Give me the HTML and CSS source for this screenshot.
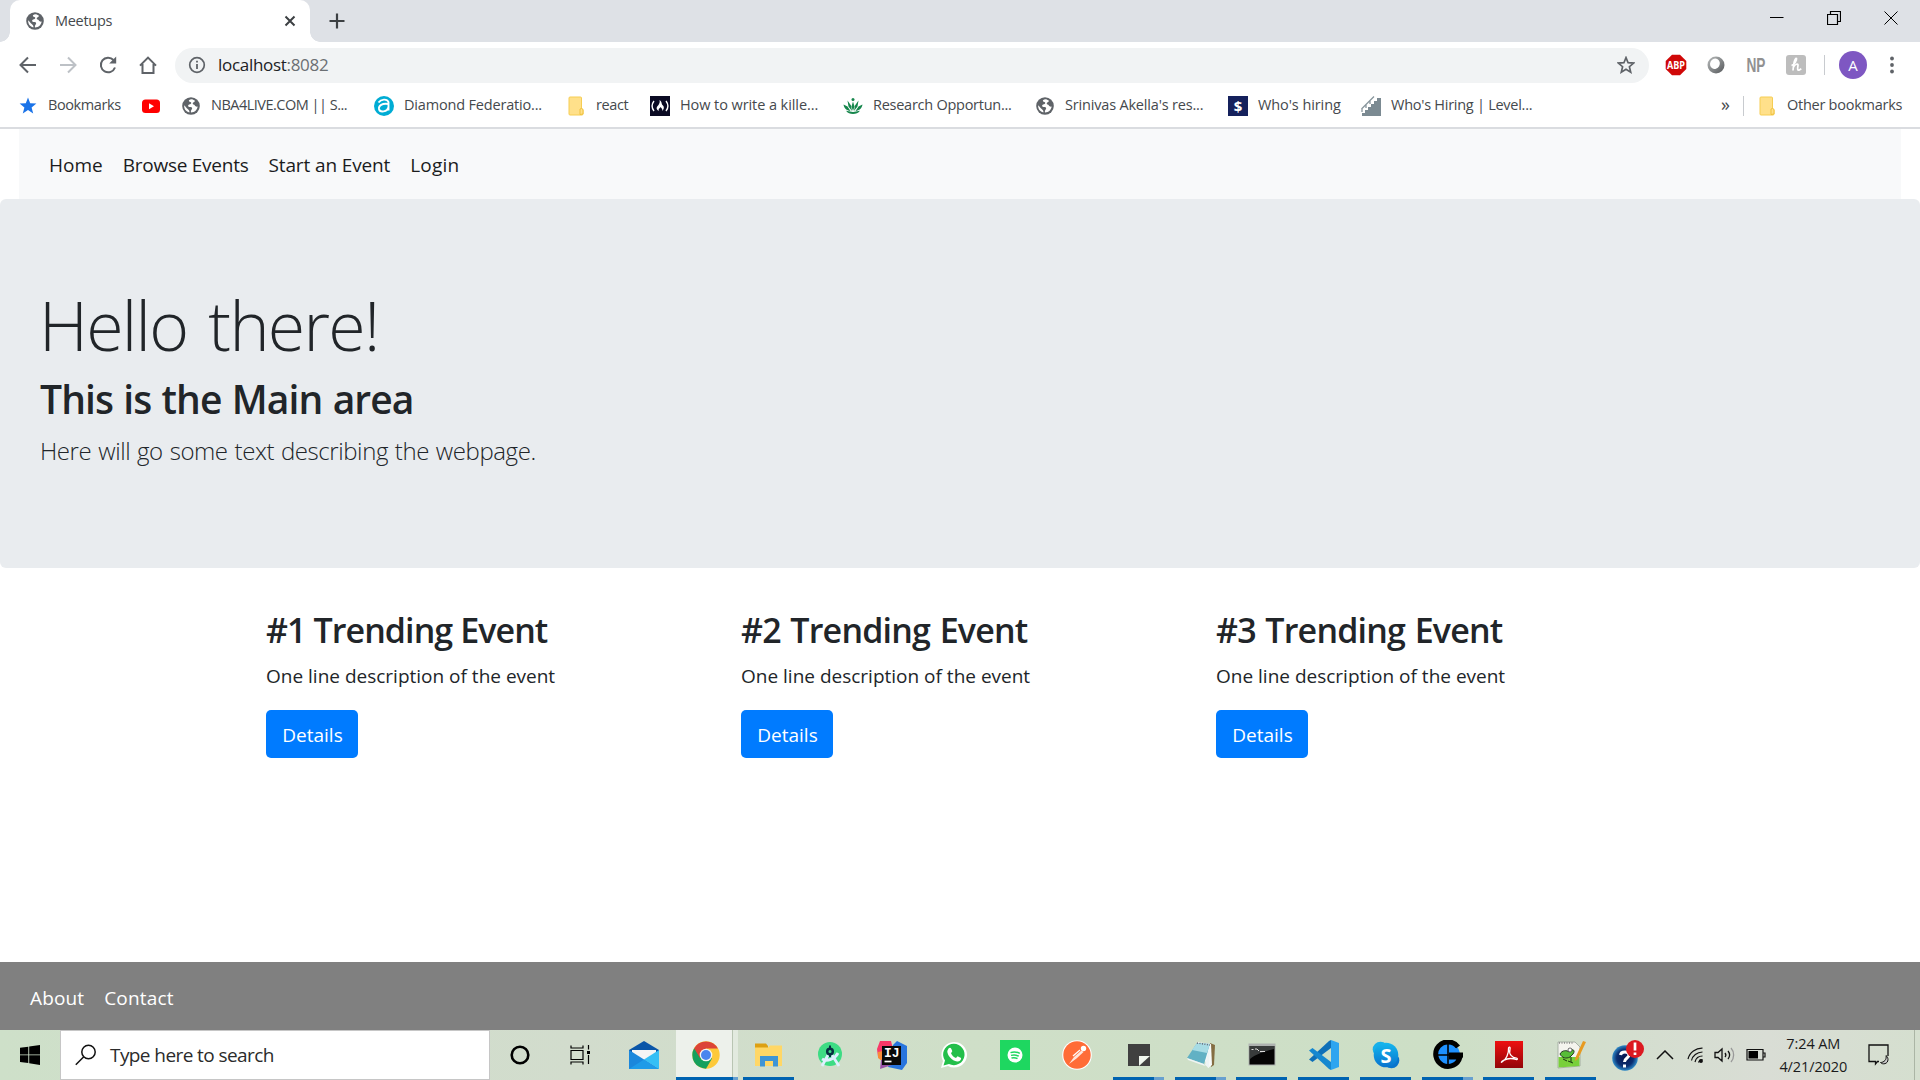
FILE: index.html
```html
<!DOCTYPE html>
<html lang="en">
<head>
<meta charset="utf-8">
<title>Meetups</title>
<link rel="stylesheet" href="styles.css">
</head>
<body>
<svg class="defs" width="0" height="0">
  <defs>
    <symbol id="globe" viewBox="0 0 18 18"><circle cx="9" cy="9" r="8.8" fill="#5f6368"/><path d="M10.2 2.2C7.500 2 6.500 3.200 7 4.300c.7 1 2.200.4 2.300 1.700C9.300 7.300 7 7 6.200 8.200c-.5 1.200.8 1.900 2.300 1.900 1.800 0 2.200 1.500 1 2.600-.8.8-.6 2-.5 2.900 3.800-.1 6.300-2.700 6.600-6-1.300.3-2.200-.2-2.700-1.100-.5-1.200-2.200-.7-2.200-2 0-1.200 1.900-1.200 2.300-2.700A7 7 0 0 0 10.200 2.200Z" fill="#fff"/><path d="M2.200 8.200c-.4 3.500 2 6.500 5.200 7.200.3-1.700-.6-2.500-1.700-3.400C4.400 11 3.600 9.700 2.200 8.200Z" fill="#fff"/></symbol>
    <symbol id="folder" viewBox="0 0 18 20"><path d="M3 1h10.500a1 1 0 0 1 1 1v10.500l1.500 1v4.500a1 1 0 0 1-1 1H3a1 1 0 0 1-1-1V2a1 1 0 0 1 1-1Z" fill="#ffe08a" stroke="#f6cd53" stroke-width="1"/><path d="M13 18.500v-5.500l1.500-.5 1.500 1v4.500Z" fill="#ffe08a" stroke="#f0c23e"/></symbol>
  </defs>
</svg>

<header class="browser">
  <div class="tabstrip">
    <div class="tab">
      <svg width="18" height="18"><use href="#globe"/></svg>
      <span class="tab-title">Meetups</span>
      <svg class="tab-close" width="12" height="12" viewBox="0 0 12 12"><path d="M1.500 1.500l9 9M10.500 1.500l-9 9" stroke="#3c4043" stroke-width="2"/></svg>
    </div>
    <svg class="new-tab" width="16" height="16" viewBox="0 0 16 16"><path d="M8 .5v15M.5 8h15" stroke="#3c4043" stroke-width="2.200"/></svg>
    <div class="window-controls">
      <svg width="14" height="14" viewBox="0 0 14 14"><path d="M0 6.500h13.500" stroke="#000"/></svg>
      <svg width="14" height="14" viewBox="0 0 14 14"><path d="M.5 3.500h10v10H.5zM3.500 3V.5h10v10H11" fill="none" stroke="#000" stroke-width="1.200"/></svg>
      <svg width="14" height="14" viewBox="0 0 14 14"><path d="M.5.5l13 13M13.500.5l-13 13" stroke="#000"/></svg>
    </div>
  </div>

  <div class="toolbar">
    <div class="nav-buttons">
      <svg width="20" height="20" viewBox="0 0 20 20"><path d="M18 10H3M10 2.500L2.500 10l7.500 7.500" fill="none" stroke="#5f6368" stroke-width="2"/></svg>
      <svg width="20" height="20" viewBox="0 0 20 20"><path d="M2 10h15M10 2.500l7.500 7.500-7.500 7.500" fill="none" stroke="#bdc1c6" stroke-width="2"/></svg>
      <svg width="20" height="20" viewBox="0 0 20 20"><path d="M17 12.500A7.300 7.300 0 1 1 15.500 5" fill="none" stroke="#5f6368" stroke-width="2"/><path d="M18.200 1.500v7h-7Z" fill="#5f6368"/></svg>
      <svg width="20" height="20" viewBox="0 0 20 20"><path d="M4.500 10v8h11v-8M2 10.600L10 2.600l8 8M3.500 10h2M14.500 10h2" fill="none" stroke="#5f6368" stroke-width="2"/></svg>
    </div>
    <div class="omnibox">
      <svg width="18" height="18" viewBox="0 0 18 18"><circle cx="9" cy="9" r="7.300" fill="none" stroke="#5f6368" stroke-width="1.700"/><path d="M9 8v5M9 4.800v1.800" stroke="#5f6368" stroke-width="1.800"/></svg>
      <span class="url">localhost<span class="port">:8082</span></span>
      <svg class="star" width="18" height="18" viewBox="0 0 18 18"><path d="M9 1.600l2.100 5.100 5.500.4-4.200 3.600 1.300 5.400L9 13.200l-4.700 2.900 1.300-5.400L1.400 7.100l5.500-.4Z" fill="none" stroke="#5f6368" stroke-width="1.700"/></svg>
    </div>
    <div class="extensions">
      <svg width="22" height="22" viewBox="0 0 22 22"><path d="M7 .7h8L21.300 7v8L15 21.300H7L.7 15V7Z" fill="#d00808"/><text x="11" y="15" text-anchor="middle" class="abp" textLength="18" lengthAdjust="spacingAndGlyphs">ABP</text></svg>
      <svg width="22" height="22" viewBox="0 0 22 22"><defs><linearGradient id="ring" x1="0" y1="0" x2="1" y2="1"><stop offset="0" stop-color="#b9bcbc"/><stop offset="1" stop-color="#55585b"/></linearGradient></defs><circle cx="11" cy="11" r="8.500" fill="url(#ring)"/><ellipse cx="9.800" cy="9.800" rx="4.800" ry="5.300" fill="#fff" transform="rotate(30 10 10)"/></svg>
      <svg class="np-icon" width="22" height="22" viewBox="0 0 22 22"><text x="1.500" y="18" class="np" textLength="19" lengthAdjust="spacingAndGlyphs">NP</text></svg>
      <svg width="22" height="22" viewBox="0 0 22 22"><rect x="1" y="1" width="20" height="20" rx="3" fill="#bdbdbd"/><path d="M6.500 11.500c3-1 5.500-5 5-7-2-.5-3 6-3.500 12M8.500 13c1.500-3 4.800-4 4.500-1.500-.3 2.300-1 5 1 4.700l2.300-1.500" fill="none" stroke="#fff" stroke-width="1.700"/></svg>
    </div>
    <span class="divider toolbar-divider"></span>
    <span class="avatar">A</span>
    <svg class="menu" width="6" height="18" viewBox="0 0 6 18"><circle cx="3" cy="2.500" r="1.900"/><circle cx="3" cy="9" r="1.900"/><circle cx="3" cy="15.500" r="1.900"/></svg>
  </div>

  <nav class="bookmarks">
    <a class="bm"><svg width="20" height="20" viewBox="0 0 20 20"><path d="M10 1.500l2.200 5.800 6.200.3-4.800 3.900 1.600 6L10 14.100l-5.200 3.400 1.600-6L1.600 7.600l6.200-.3Z" fill="#1a73e8"/></svg><span class="bm-label tight">Bookmarks</span></a>
    <a class="bm"><svg width="20" height="20" viewBox="0 0 20 20"><rect x="1" y="3.500" width="18" height="13.500" rx="3.500" fill="#f00"/><path d="M8 7.300v6l5-3Z" fill="#fff"/></svg></a>
    <a class="bm"><svg width="20" height="20" viewBox="0 0 20 20"><use href="#globe" x="1" y="1" width="18" height="18"/></svg><span class="bm-label tighter">NBA4LIVE.COM || S...</span></a>
    <a class="bm"><svg width="20" height="20" viewBox="0 0 20 20"><circle cx="10" cy="10" r="10" fill="#00acd4"/><path d="M4.500 6.500C7 3 13 2.500 14.500 6v8.500M14.500 8C8 7 4.500 9.500 5 13c.8 4 8.500 3 9.500-2" fill="none" stroke="#fff" stroke-width="1.900"/></svg><span class="bm-label">Diamond Federatio...</span></a>
    <a class="bm"><svg width="20" height="20" viewBox="0 0 18 20"><use href="#folder" width="18" height="20"/></svg><span class="bm-label tight">react</span></a>
    <a class="bm"><svg width="20" height="20" viewBox="0 0 20 20"><path d="M0 0h20v20H0Z" fill="#0a0a23"/><path d="M4 5C1.700 8 1.700 12 4 15M16 5c2.300 3 2.300 7 0 10" fill="none" stroke="#fff" stroke-width="1.400"/><path d="M9.500 4c3 2 1.500 4 3.500 5.500 1.500 1.700 1 4-1 5.500 1-2.300-.8-2.500-1.200-4C9.500 12.500 8 13 8.800 15 5.500 13 6.500 11 8.500 9 9.500 7.500 10 6 9.500 4Z" fill="#fff"/></svg><span class="bm-label loose">How to write a kille...</span></a>
    <a class="bm"><svg width="20" height="20" viewBox="0 0 20 20" fill="#16864c"><circle cx="10" cy="3.500" r="1.500"/><path d="M10 5.500l1.500 5L10 15l-1.500-4.500ZM4.500 4.500l3.500 5 1 5.500-3.500-4.500ZM15.500 4.500l-3.500 5-1 5.500 3.500-4.500ZM.5 8.500l4 2 3 4.500c-4-.5-6.500-3-7-6.500ZM19.500 8.500l-4 2-3 4.500c4-.5 6.500-3 7-6.500ZM3 14.800l7 1.200 7-1.200c-3 4.300-11 4.300-14 0Z"/></svg><span class="bm-label mid">Research Opportun...</span></a>
    <a class="bm"><svg width="20" height="20" viewBox="0 0 20 20"><use href="#globe" x="1" y="1" width="18" height="18"/></svg><span class="bm-label">Srinivas Akella's res...</span></a>
    <a class="bm"><svg width="20" height="20" viewBox="0 0 20 20"><path d="M0 0h20v20H0Z" fill="#15215c"/><text x="10" y="15.500" text-anchor="middle" class="dollar">$</text></svg><span class="bm-label loose">Who's hiring</span></a>
    <a class="bm"><svg width="20" height="20" viewBox="0 0 20 20"><path d="M1 20v-3h3v-3h3v-3h3V8h3V5h3V2h4v18Z" fill="#7b8a92"/><path d="M.5 13L13 .5M1 13v3M5 9v3M9 5v3" stroke="#89969d" stroke-width="1.300"/></svg><span class="bm-label mid">Who's Hiring | Level...</span></a>
    <a class="bm-more">»</a>
    <span class="divider"></span>
    <a class="bm"><svg width="20" height="20" viewBox="0 0 18 20"><use href="#folder" width="18" height="20"/></svg><span class="bm-label mid">Other bookmarks</span></a>
  </nav>
</header>

<main class="page">
  <nav class="site-nav">
    <a>Home</a><a class="l-browse">Browse Events</a><a class="l-start">Start an Event</a><a class="l-login">Login</a>
  </nav>
  <section class="jumbotron">
    <h1>Hello there!</h1>
    <h2>This is the Main area</h2>
    <p>Here will go some text describing the webpage.</p>
  </section>
  <section class="events">
    <article class="event"><h3>#1 Trending Event</h3><p>One line description of the event</p><a class="btn">Details</a></article>
    <article class="event"><h3>#2 Trending Event</h3><p>One line description of the event</p><a class="btn">Details</a></article>
    <article class="event"><h3>#3 Trending Event</h3><p>One line description of the event</p><a class="btn">Details</a></article>
  </section>
  <footer class="site-footer"><a>About</a><a>Contact</a></footer>
</main>

<footer class="taskbar">
  <div class="start"><svg width="20" height="20" viewBox="0 0 20 20"><path d="M0 2.800L8.300 1.700v7.700H0ZM9.200 1.600L20 0v9.400H9.200ZM0 10.300h8.300V18L0 16.900ZM9.200 10.300H20v9.700L9.200 18.300Z"/></svg></div>
  <div class="search">
    <svg width="22" height="22" viewBox="0 0 22 22"><circle cx="13.500" cy="8" r="6.700" fill="none" stroke="#111" stroke-width="1.500"/><path d="M8.800 12.800L.8 20.800" stroke="#111" stroke-width="1.500"/></svg>
    <span class="search-text">Type here to search</span>
  </div>
  <div class="apps">
    <div class="app cortana"><svg width="20" height="20" viewBox="0 0 20 20"><circle cx="10" cy="10" r="8.300" fill="none" stroke="#000" stroke-width="2.600"/></svg></div>
    <div class="app"><svg width="22" height="20" viewBox="0 0 22 20" fill="none" stroke="#000" stroke-width="1.200"><path d="M1 5.500h12v9H1zM1 .5v2.500h12V.5M1 19.500V17h12v2.500M18.500 0v4.500M18.500 10v9"/><path d="M17 6h3v3h-3z" fill="#000" stroke="none"/></svg></div>
    <div class="app mail"><svg width="30" height="30" viewBox="0 0 30 30"><path d="M0 10L15 1l15 9v6H0Z" fill="#0a55a8"/><path d="M3 10h24v6L15 20 3 16Z" fill="#f5f5f5"/><path d="M0 10l30 19H0Z" fill="#1b87dc"/><path d="M30 10L15 19.500 30 29Z" fill="#35bff5"/><path d="M15 19.500L30 29H0Z" fill="#1f9be8"/></svg></div>
    <div class="app active"><svg width="28" height="28" viewBox="0 0 28 28"><circle cx="14" cy="14" r="13.700" fill="#fdc93a"/><path d="M14 14L2.100 7.200A13.700 13.700 0 0 0 14 27.700L20 17.500Z" fill="#16a05d"/><path d="M2.100 7.200A13.700 13.700 0 0 1 25.900 7.500H14L8 17Z" fill="#dc4437"/><circle cx="14" cy="14" r="6.300" fill="#f4f6f4"/><circle cx="14" cy="14" r="5" fill="#4a86ee"/></svg></div>
    <div class="app open"><svg width="30" height="28" viewBox="0 0 30 28"><path d="M1 2.500h11l2 2.500v4H1Z" fill="#dda013"/><path d="M1 6.500h13l2-2h12V25H1Z" fill="#ffd766"/><path d="M6 25.500V15h18v10.500h-5V20h-8v5.500Z" fill="#3f95d5"/></svg></div>
    <div class="app"><svg width="26" height="28" viewBox="0 0 26 28"><circle cx="13" cy="13" r="12" fill="#3ddc84"/><path d="M11 14L5 25M15 14l7 11M5 18c5 3 13 0 16-6" stroke="#dff0ff" stroke-width="2.800" fill="none"/><circle cx="13" cy="10.500" r="2.800" fill="none" stroke="#073042" stroke-width="2.500"/><path d="M13 4.500v3M13 13v3" stroke="#073042" stroke-width="2"/></svg></div>
    <div class="app"><svg width="30" height="30" viewBox="0 0 30 30"><path d="M3 1h11l3 12L1 17l-1-8Z" fill="#f83868"/><path d="M1 12l9-2v15L1 18Z" fill="#f98b38"/><path d="M16 5l4-4 10 5v17l-5 7-14-3Z" fill="#2875de"/><path d="M4 20l9-2 2 7-12 4Z" fill="#9852a8"/><path d="M5 6h19v19H5Z" fill="#090909"/><text x="7" y="16.500" class="ij">IJ</text><path d="M7.500 21.500h7" stroke="#fff" stroke-width="1.700"/></svg></div>
    <div class="app"><svg width="28" height="28" viewBox="0 0 28 28"><path d="M1 27l2-7A12.800 12.800 0 1 1 8 25Z" fill="#fff"/><path d="M3.500 24.500L5 19.500A10.700 10.700 0 1 1 9 23Z" fill="#23bf4a"/><path d="M8.500 7.500c2-1.800 2.800-.2 3.800 2.800l-1.300 2c1 2.300 2.700 3.800 5 4.700l1.500-1.800 3.600 1.700c.3 2-1.600 3.700-4 3.500C12 20 7 14 7.300 10Z" fill="#fff"/></svg></div>
    <div class="app"><svg width="30" height="30" viewBox="0 0 30 30"><path d="M0 0h30v30H0Z" fill="#1ed760"/><circle cx="15" cy="15" r="7.500" fill="#fff"/><path d="M10.500 12.600c3-1 6.500-.7 9.300.8M11 15.400c2.600-.8 5.400-.5 7.800.8M11.500 18c2-.5 4.300-.3 6 .7" fill="none" stroke="#1ed760" stroke-width="1.500"/></svg></div>
    <div class="app"><svg width="30" height="30" viewBox="0 0 30 30"><circle cx="15" cy="15" r="14.800" fill="#fff"/><circle cx="15" cy="15" r="13.700" fill="#ff6c37"/><circle cx="21.500" cy="8.500" r="2.700" fill="#fff"/><path d="M19.500 10.500L12 17l-5 7 7.500-5.500 7-6.500Z" fill="#ffe6dc"/><path d="M18 10l-7 6" stroke="#fff" stroke-width="1.300"/></svg></div>
    <div class="app open multi"><svg width="24" height="24" viewBox="0 0 24 24"><path d="M1 1h22v12H12v10H1Z" fill="#404040"/><path d="M12 13h11L12 23Z" fill="#f0f6ee"/><path d="M23 13v10H12Z" fill="#404040"/></svg></div>
    <div class="app open multi"><svg width="30" height="28" viewBox="0 0 30 28"><path d="M24 2l5 2-1 20-3 2Z" fill="#846d42"/><path d="M11 1l14 2 1 21-4 3Z" fill="#f7fafa"/><path d="M11 2l13 1-6 20L1 17Z" fill="#62b1c4"/><path d="M11 2l13 1-3 9L6 9Z" fill="#a7dce5"/><path d="M1 17l17 6 1 2L2 19ZM24 3l-5 21 4 3Z" fill="#eef4f4"/><path d="M11 2l13 2" stroke="#667" stroke-width="1.500" stroke-dasharray="1 1.500"/></svg></div>
    <div class="app open"><svg width="28" height="24" viewBox="0 0 28 24"><path d="M.5.5h27v22H.5Z" fill="#aeb2b0"/><path d="M1.500 3h25v18.500h-25Z" fill="#050505"/><path d="M2 3h24v3C18 8 8 11 2 16Z" fill="#383b3b"/><path d="M3.500 6.500h2M7 6h2l2 2M12 8.500h5" stroke="#ddd" fill="none"/></svg></div>
    <div class="app open"><svg width="30" height="30" viewBox="0 0 30 30"><path d="M22 0v8L3.500 22 0 19.500 20 1Z" fill="#0f70b8"/><path d="M3.500 8L0 10.500 20 29l2 1v-8Z" fill="#1688d0"/><path d="M22 0l8 3v24l-8 3Z" fill="#2ea5f0"/></svg></div>
    <div class="app open"><svg width="28" height="28" viewBox="0 0 28 28"><defs><linearGradient id="sky" x1="0" y1="0" x2="0" y2="1"><stop offset="0" stop-color="#15b7ee"/><stop offset="1" stop-color="#0873ce"/></linearGradient></defs><circle cx="8.500" cy="8.500" r="7.800" fill="#17b0ea"/><circle cx="19.500" cy="19.500" r="7.800" fill="#0874cd"/><circle cx="14" cy="14" r="12.300" fill="url(#sky)"/><text x="14" y="21.500" text-anchor="middle" class="skype">S</text></svg></div>
    <div class="app open multi"><svg width="30" height="30" viewBox="0 0 30 30"><circle cx="15" cy="15" r="12" fill="#1e90ff"/><path d="M25 7A12.300 12.300 0 1 0 27 17H16" fill="none" stroke="#000" stroke-width="5"/><path d="M15 4v22M4 15h12" stroke="#000" stroke-width="1.600"/><path d="M19 8h4l2 4h-6Z" fill="#1e90ff"/><path d="M16 12.500h14v5H16Z"/></svg></div>
    <div class="app open"><svg width="28" height="28" viewBox="0 0 28 28"><defs><linearGradient id="pdf" x1="0" y1="0" x2="0" y2="1"><stop offset="0" stop-color="#ee1010"/><stop offset="1" stop-color="#930508"/></linearGradient></defs><path d="M0 0h28v27H0Z" fill="url(#pdf)"/><path d="M7 21c4-2 7-9 6.500-13.500 0-2 2.200-2 1.500.7-1.500 5 2 8.500 6.500 9 1.500.2 1 1.800-.5 1.300-4-1.500-9-1-12.500.8-2.500 1.500-2.500 2.600-1.500 1.700Z" fill="none" stroke="#fff" stroke-width="1.300"/></svg></div>
    <div class="app open"><svg width="30" height="30" viewBox="0 0 30 30"><path d="M2 2h17l5 5v19l-22 2Z" fill="#f4f4ee" stroke="#9aa39a" stroke-width=".8"/><path d="M2.500 17h21v9l-21 1.500Z" fill="#78d03a"/><path d="M4 14c2-4 7-4 9-2 3-4 7-2 4 2l-3 3c-4 2-8 1-10-3Z" fill="#57bd37" stroke="#243b20"/><circle cx="14" cy="10" r="2" fill="#fff" stroke="#333" stroke-width=".7"/><path d="M7 19l4 2M12 21l5 2M15 17v5" stroke="#193810"/><path d="M27 1l3 1-8 17-3 2 .5-3.500Z" fill="#e89a20"/><path d="M3 3h14" stroke="#555" stroke-dasharray="1 1.500"/></svg></div>
  </div>
  <div class="tray">
    <svg width="32" height="32" viewBox="0 0 32 32"><defs><radialGradient id="help"><stop offset="0" stop-color="#08144a"/><stop offset=".65" stop-color="#0a2e72"/><stop offset="1" stop-color="#2f8ac7"/></radialGradient></defs><circle cx="13" cy="19" r="12.800" fill="url(#help)"/><path d="M8.500 16c.5-4 8.500-4 8.500 0 0 3-4.500 3-4.500 7M12.500 25.500v3" fill="none" stroke="#fff" stroke-width="3"/><circle cx="23" cy="10" r="9" fill="#dc1920"/><path d="M23 3.500v8M23 13.500v2.500" stroke="#fff" stroke-width="2.700"/></svg>
    <svg class="chevron" width="18" height="10" viewBox="0 0 18 10"><path d="M1 9l8-8 8 8" fill="none" stroke="#111" stroke-width="1.500"/></svg>
    <svg class="wifi" width="18" height="16" viewBox="0 0 18 16" fill="none" stroke="#111" stroke-width="1.200"><path d="M1 12C2.500 5 9 1 15.500 1.200M4.500 13.500C5.500 8.500 10 5.200 15.500 5M8 15c.8-3.500 3.500-6 7.500-6M11.500 15.500c.5-1.500 2-3 4-3"/><circle cx="14" cy="14" r="1.300" fill="#111"/></svg>
    <svg class="sound" width="22" height="18" viewBox="0 0 22 18" fill="none" stroke="#111" stroke-width="1.300"><path d="M1 6.500h3L8 3v12l-4-3.500H1ZM11 7c1 1.300 1 3 0 4M14 5c2 2.500 2 5.500 0 8"/><path d="M17 2c3.500 4 3.500 10 0 14" stroke="#999"/></svg>
    <svg class="battery" width="20" height="14" viewBox="0 0 20 14"><path d="M1 1.500h16v10.500H1ZM17.500 5h1.500v4h-1.500" fill="none" stroke="#111" stroke-width="1.200"/><path d="M2.500 3h9.500v7.500H2.500Z"/></svg>
    <div class="clock"><span class="time">7:24 AM</span><span class="date">4/21/2020</span></div>
    <svg class="notify" width="22" height="22" viewBox="0 0 22 22"><path d="M11 17.500H9.500l-2 2.500v-2.500H1V1h19v11" fill="none" stroke="#111" stroke-width="1.300"/><path d="M18 11.500c1 4-2 7-5.500 7 2 2.500 7.500 1.500 7.500-3 0-1.500-.7-3-2-4Z" fill="#ccc" stroke="#111"/></svg>
    <span class="show-desktop"></span>
  </div>
</footer>
</body>
</html>
```
FILE: styles.css
```css
* { box-sizing: border-box; }
body {
  margin: 0;
  width: 1920px;
  height: 1080px;
  overflow: hidden;
  display: flex;
  flex-direction: column;
  background: #fff;
  color: #212529;
  font-family: "Open Sans", "Noto Sans", sans-serif;
  font-size: 19px;
}
h1, h2, h3, p { margin: 0; white-space: nowrap; }
svg { display: block; flex: none; }
.defs { position: absolute; }
.divider { width: 1px; height: 20px; background: #c8cbcf; }

/* Browser chrome */
.browser { height: 129px; border-bottom: 2px solid #dadce0; }
.tabstrip { height: 42px; padding-left: 10px; display: flex; background: #dee1e6; }
.tab {
  position: relative;
  width: 300px;
  padding: 0 14px 0 16px;
  display: flex;
  align-items: center;
  background: #fff;
  border-radius: 10px 10px 0 0;
}
.tab::before, .tab::after {
  content: "";
  position: absolute;
  bottom: 0;
  width: 10px;
  height: 10px;
}
.tab::before { left: -10px; background: radial-gradient(circle at 0 0, transparent 9.500px, #fff 10px); }
.tab::after { right: -10px; background: radial-gradient(circle at 100% 0, transparent 9.500px, #fff 10px); }
.tab-title { margin-left: 11px; padding-bottom: 2px; font-size: 14.500px; color: #45494d; letter-spacing: -.3px; }
.tab-close { margin-left: auto; }
.new-tab { margin: 13px 0 0 19px; }
.window-controls { margin: 11px 22px 0 auto; display: flex; gap: 43px; }

.toolbar { height: 46px; display: flex; align-items: center; padding: 0 25px 0 18px; }
.nav-buttons { width: 157px; display: flex; gap: 20px; }
.omnibox {
  width: 1474px;
  height: 35px;
  padding: 0 14px 0 13px;
  display: flex;
  align-items: center;
  border-radius: 18px;
  background: #f1f3f4;
}
.url { margin-left: 12px; padding-bottom: 2px; font-size: 17px; color: #202124; letter-spacing: -.3px; }
.port { color: #6b6f73; }
.star { margin-left: auto; }
.extensions { display: flex; gap: 18px; margin-left: 16px; }
.abp { font: 700 10px "Open Sans", sans-serif; fill: #fff; }
.np-icon { overflow: visible; }
.np { font: 700 20px "Liberation Sans", sans-serif; fill: #919191; }
.toolbar-divider { margin-left: 17px; }
.avatar {
  width: 28px;
  height: 28px;
  margin-left: 14px;
  border-radius: 50%;
  background: #7e57c2;
  color: #fff;
  font-size: 15px;
  line-height: 28px;
  text-align: center;
}
.menu { margin-left: auto; fill: #5f6368; }

.bookmarks {
  height: 36px;
  padding: 0 18px;
  display: grid;
  grid-template-columns: 123px 40px 193px 192px 84px 193px 192px 193px 133px 360px 22px 14px 1fr;
  align-items: center;
}
.bm { display: flex; align-items: center; gap: 10px; white-space: nowrap; }
.bm-label { padding-bottom: 3px; font-size: 14.500px; color: #45494d; letter-spacing: -.18px; }
.bm-label.tighter { letter-spacing: -.5px; }
.bm-label.tight { letter-spacing: -.4px; }
.bm-label.mid { letter-spacing: -.26px; }
.bm-label.loose { letter-spacing: -.08px; }
.bm-more { font-size: 18px; color: #45494d; padding-bottom: 5px; }

/* Web page */
.page { height: 901px; display: flex; flex-direction: column; }
.site-nav { height: 70px; margin: 0 19px; padding: 2px 30px 0; display: flex; align-items: center; gap: 20px; background: #f8f9fa; color: #1b1c1d; }
.l-browse { letter-spacing: -.25px; }
.l-start { letter-spacing: -.13px; }
.l-login { letter-spacing: .2px; }
.jumbotron { height: 369px; padding: 84px 40px 0; border-radius: 6px; background: #e9ecef; }
.jumbotron h1 { height: 92px; font-size: 68px; font-weight: 300; line-height: 84px; letter-spacing: -1.700px; word-spacing: 5px; text-indent: -1px; }
.jumbotron h2 { height: 57px; font-size: 39px; font-weight: 600; line-height: 48px; letter-spacing: -.9px; word-spacing: 1px; }
.jumbotron p { font-size: 24px; font-weight: 300; line-height: 38px; letter-spacing: -.420px; word-spacing: 1.100px; }
.events { width: 1425px; margin: 40px auto 0; display: grid; grid-template-columns: repeat(3, 475px); }
.event { padding-left: 18.500px; }
.event h3 { height: 42px; font-size: 34px; font-weight: 600; line-height: 44px; letter-spacing: -.8px; word-spacing: 1.500px; }
.event:first-child h3 { letter-spacing: -.920px; word-spacing: 0; }
.event p { margin: 11px 0 19px; line-height: 30px; }
.btn { display: block; width: 92px; height: 48px; padding-left: 1px; border-radius: 5px; background: #007bff; color: #fff; line-height: 50px; text-align: center; }
.site-footer { height: 68px; margin-top: auto; padding: 4px 30px 0; display: flex; align-items: center; gap: 20px; background: #808080; color: #fff; letter-spacing: .15px; }

/* Taskbar */
.taskbar { height: 50px; display: flex; background: linear-gradient(90deg, #cee0c9, #d2dccd 30%, #cfdfc8 50%, #cddfc6 75%, #d9ddd5 92%, #d5dfcf); }
.start { flex: none; width: 60px; display: grid; place-items: center; }
.search { flex: none; width: 430px; padding-left: 14px; display: flex; align-items: center; gap: 13px; background: #fff; border: 1px solid #c6c6c6; color: #2b2b2b; }
.search-text { letter-spacing: -.580px; }
.apps { flex: none; display: flex; }
.app { flex: none; position: relative; width: 61.720px; display: grid; place-items: center; }
.cortana { width: 60px; }
.mail { width: 64.300px; }
.active { background: linear-gradient(90deg, #edf1eb 56px, #b9c5b3 56px, #b9c5b3 57px, #e2eadf 57px); }
.active svg { margin-right: 1px; }
.active::after, .open::after { content: ""; position: absolute; bottom: 0; left: 5px; width: 51px; height: 3px; background: #0063b1; }
.active::after { left: 0; width: 100%; background: linear-gradient(90deg, #0063b1 57px, #68a0cf 57px); }
.multi::after { background: linear-gradient(90deg, #0063b1 41px, #68a0cf 41px); }
.ij { font: 700 13px "Liberation Mono", monospace; fill: #fff; }
.dollar { font: 700 15px "Open Sans", sans-serif; fill: #fff; }
.skype { font: 700 20px "Open Sans", sans-serif; fill: #fff; }
.tray { flex: 1; display: flex; align-items: center; padding-left: 10px; }
.chevron { margin-left: 12.500px; }
.wifi { margin-left: 13px; }
.sound { margin-left: 9px; }
.battery { margin-left: 10px; }
.clock { flex: none; width: 94px; display: flex; flex-direction: column; align-items: center; font-size: 14.500px; line-height: 23px; letter-spacing: -.1px; color: #1b1b1b; padding-bottom: 1px; }
.notify { margin-left: 8px; }
.show-desktop { flex: none; width: 1px; height: 50px; margin-left: 24px; background: #abb5a5; }
```
